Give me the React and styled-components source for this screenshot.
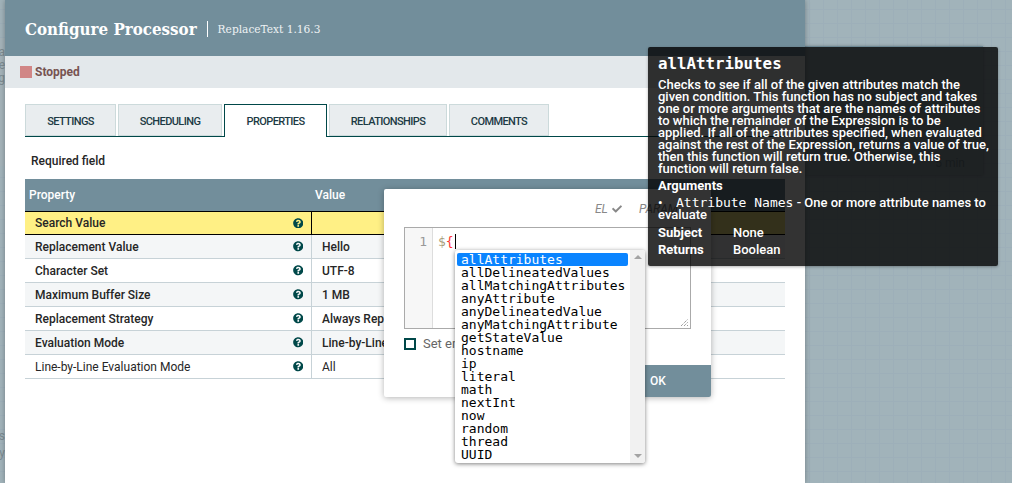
import React from "react";
import styled, { createGlobalStyle } from "styled-components";
import { FaQuestionCircle, FaCheck } from "react-icons/fa";

const GlobalStyle = createGlobalStyle`
    html, body {
        margin: 0;
        padding: 0;
        overflow: hidden;
    }
    body {
        font-family: Roboto, "Liberation Sans", sans-serif;
    }
`;

const Canvas = styled.div`
    position: relative;
    display: flex;
    width: 1012px;
    height: 483px;
    overflow: hidden;
    background-color: #a1b3ba;
    background-image:
        linear-gradient(to right, #9dafb9 1px, transparent 1px),
        linear-gradient(to bottom, #9dafb9 1px, transparent 1px);
    background-size: 14px 14px;
    background-position: 11px 9px;
`;

const LeftStrip = styled.div`
    display: flex;
    flex-direction: column;
    width: 5px;
    flex-shrink: 0;
    overflow: hidden;
`;

const StripPanel = styled.div`
    display: flex;
    flex-direction: column;
    align-items: flex-end;
    margin-top: 38px;
    height: 128px;
    padding-top: 8px;
    box-sizing: border-box;
    background: #a4b3b9;
    color: #7d8b91;
    font-size: 12px;
    line-height: 13px;
`;

const StripText = styled.div`
    display: flex;
    flex-direction: column;
    align-items: flex-end;
    margin-top: 262px;
    color: #7d8b91;
    font-size: 12px;
    line-height: 17px;
`;

const Dialog = styled.div`
    display: flex;
    flex-direction: column;
    width: 800px;
    height: 483px;
    flex-shrink: 0;
    background: #fff;
    box-shadow: 0 0 5px rgba(0, 0, 0, 0.3);
    z-index: 1;
`;

const DialogHeader = styled.div`
    display: flex;
    align-items: center;
    height: 56px;
    padding-left: 20px;
    padding-top: 2px;
    box-sizing: border-box;
    background: #728e9b;
    color: #fff;
`;

const Title = styled.div`
    font-family: "DejaVu Serif", serif;
    font-stretch: condensed;
    font-weight: 700;
    font-size: 16.8px;
    padding-right: 10px;
    border-right: 1px solid #fff;
    line-height: 16px;
`;

const Subtitle = styled.div`
    font-family: "DejaVu Serif", serif;
    font-stretch: condensed;
    font-size: 11.8px;
    margin-left: 10px;
    color: #eef2f4;
`;

const StatusBar = styled.div`
    display: flex;
    align-items: center;
    gap: 3px;
    height: 32px;
    padding-left: 15px;
    background: #e3e8eb;
`;

const StatusIcon = styled.span`
    width: 12px;
    height: 12px;
    background: #d18686;
`;

const StatusLabel = styled.span`
    font-size: 12px;
    font-weight: 700;
    color: #775351;
`;

const Content = styled.div`
    display: flex;
    flex-direction: column;
    padding: 16px 20px 0;
`;

const Tabs = styled.div`
    display: flex;
    gap: 2px;
    height: 33px;
    box-sizing: border-box;
    border-bottom: 1px solid #004849;
`;

const Tab = styled.div`
    display: flex;
    align-items: center;
    justify-content: center;
    width: ${(p) => p.$width}px;
    height: ${(p) => (p.$active ? 33 : 32)}px;
    padding-top: ${(p) => (p.$active ? 1 : 2)}px;
    box-sizing: border-box;
    font-size: 11px;
    letter-spacing: -0.6px;
    font-weight: 500;
    color: #1c3a44;
    background: ${(p) => (p.$active ? "#fff" : "#e9edef")};
    border: 1px solid ${(p) => (p.$active ? "#004849" : "#ccdadb")};
    border-bottom: ${(p) => (p.$active ? "none" : "1px solid #ccdadb")};
`;

const RequiredNote = styled.div`
    margin: 17px 0 0 6px;
    height: 25px;
    font-size: 12px;
    font-weight: 500;
    color: #262626;
    line-height: 14px;
`;

const Table = styled.div`
    display: flex;
    flex-direction: column;
    width: 760px;
`;

const HeaderRow = styled.div`
    display: flex;
    align-items: center;
    height: 32px;
    background: #728e9b;
    color: #fff;
    font-size: 12px;
    font-weight: 500;
`;

const HeaderCell = styled.div`
    width: ${(p) => p.$width}px;
    padding-left: 4px;
    padding-bottom: 1px;
    box-sizing: border-box;
`;

const Row = styled.div`
    display: flex;
    height: 24px;
    box-sizing: border-box;
    font-size: 12px;
    color: #262626;
    background: ${(p) => (p.$selected ? "#fff085" : p.$striped ? "#f4f6f7" : "#fff")};
    border-bottom: 1px solid ${(p) => (p.$selected ? "#000" : "#c7d2d7")};
    border-top: ${(p) => (p.$selected ? "1px solid #000" : "none")};
    font-weight: ${(p) => (p.$bold ? 500 : 400)};
`;

const NameCell = styled.div`
    display: flex;
    align-items: center;
    justify-content: space-between;
    width: 286px;
    padding: 0 8px 0 10px;
    box-sizing: border-box;
`;

const ValueCell = styled.div`
    display: flex;
    align-items: center;
    flex: 1;
    padding-left: 10px;
    border-left: 1px solid ${(p) => (p.$selected ? "#000" : "#c7d2d7")};
`;

const Help = styled(FaQuestionCircle)`
    width: 10.5px;
    height: 10.5px;
    color: #004849;
`;

const RightArea = styled.div`
    display: flex;
    flex-direction: column;
    flex: 1;
    padding-top: 46px;
`;

const BackPanel = styled.div`
    display: flex;
    flex-direction: column;
    align-items: flex-end;
    width: 178px;
    height: 129px;
    padding: 98px 18px 0 0;
    box-sizing: border-box;
    background: #97a9b0;
    border-top: 1px solid #728e9b;
    box-shadow: 0 0 3px rgba(0, 0, 0, 0.25);
    color: #71858d;
    font-size: 12px;
    line-height: 37px;
`;

const ExpressionDialog = styled.div`
    position: absolute;
    left: 384px;
    top: 189px;
    display: flex;
    flex-direction: column;
    width: 327px;
    height: 208px;
    background: #fff;
    border-radius: 2px;
    box-shadow: 0 1px 6px rgba(0, 0, 0, 0.3);
    z-index: 2;
`;

const SupportRow = styled.div`
    display: flex;
    align-items: center;
    gap: 4px;
    height: 38px;
    padding: 2px 0 0 211px;
    box-sizing: border-box;
    font-size: 12px;
    font-style: italic;
    color: #888;
`;

const SupportLabel = styled.span`
    margin-left: ${(p) => p.$gap || 0}px;
`;

const CheckMark = styled(FaCheck)`
    width: 10px;
    height: 10px;
    color: #888;
`;

const Editor = styled.div`
    position: relative;
    display: flex;
    height: 102px;
    margin: 0 20px;
    box-sizing: border-box;
    border: 1px solid #aaa;
    font-family: "DejaVu Sans Mono", monospace;
    font-size: 13px;
    line-height: 15px;
`;

const Gutter = styled.div`
    width: 28px;
    padding: 6px 5px 0 0;
    box-sizing: border-box;
    text-align: right;
    color: #999;
    background: #f7f7f7;
    border-right: 1px solid #ddd;
`;

const Code = styled.div`
    display: flex;
    padding: 6px 0 0 5px;
`;

const Dollar = styled.span`
    color: #a79f7e;
`;

const Brace = styled.span`
    color: #f33;
`;

const Caret = styled.span`
    width: 1px;
    height: 15px;
    margin-left: 1px;
    background: #000;
`;

const ResizeHandle = styled.svg`
    position: absolute;
    right: 1px;
    bottom: 1px;
    width: 9px;
    height: 9px;
`;

const CheckRow = styled.div`
    display: flex;
    align-items: center;
    gap: 7px;
    margin: 7px 20px 0;
    font-size: 13px;
    color: #666;
`;

const Box = styled.span`
    width: 12px;
    height: 12px;
    box-sizing: border-box;
    border: 2px solid #004849;
`;

const Footer = styled.div`
    display: flex;
    justify-content: flex-end;
    margin-top: auto;
`;

const OkButton = styled.div`
    display: flex;
    align-items: center;
    width: 92px;
    height: 32px;
    padding-left: 31px;
    box-sizing: border-box;
    font-size: 12px;
    font-weight: 500;
    color: #fff;
    background: #728e9b;
    border-radius: 0 0 2px 0;
`;

const Completions = styled.div`
    position: absolute;
    left: 455px;
    top: 250px;
    display: flex;
    width: 190px;
    height: 213px;
    background: #fff;
    border-radius: 3px;
    box-shadow: 0 1px 4px rgba(0, 0, 0, 0.5);
    overflow: hidden;
    z-index: 3;
`;

const CompletionList = styled.div`
    flex: 1;
    padding: 3px 2px;
    font-family: "DejaVu Sans Mono", monospace;
    font-size: 13px;
    line-height: 13px;
    color: #000;
`;

const Completion = styled.div`
    height: 13px;
    padding-left: 4px;
    border-radius: 2px;
    color: ${(p) => (p.$active ? "#fff" : "#000")};
    background: ${(p) => (p.$active ? "#0a84ff" : "transparent")};
`;

const Scrollbar = styled.div`
    display: flex;
    flex-direction: column;
    align-items: center;
    justify-content: space-between;
    width: 15px;
    padding: 5px 0;
    box-sizing: border-box;
    background: #f1f1f1;
`;

const Arrow = styled.span`
    width: 0;
    height: 0;
    border-left: 4px solid transparent;
    border-right: 4px solid transparent;
    border-${(p) => (p.$up ? "bottom" : "top")}: 4px solid #a3a3a3;
`;

const Tooltip = styled.div`
    position: absolute;
    left: 648px;
    top: 47px;
    width: 350px;
    height: 219px;
    padding: 8px 8px 8px 10px;
    box-sizing: border-box;
    background: rgba(0, 0, 0, 0.8);
    border-radius: 2px;
    box-shadow: 0 1px 3px rgba(0, 0, 0, 0.3);
    color: #fff;
    font-size: 13px;
    font-weight: 500;
    line-height: 12px;
    z-index: 4;
`;

const TipTitle = styled.div`
    font-family: "DejaVu Sans Mono", monospace;
    font-size: 15.8px;
    font-weight: 700;
    line-height: 17px;
    margin-bottom: 7px;
`;

const TipHeading = styled.div`
    font-weight: 700;
    margin-top: 2px;
    line-height: 17px;
`;

const TipArgument = styled.div`
    margin: 3px 0;
`;

const Bullet = styled.span`
    display: inline-block;
    width: 18px;
`;

const Mono = styled.span`
    font-family: "DejaVu Sans Mono", monospace;
    font-weight: 400;
    font-size: 13px;
`;

const TipRow = styled.div`
    display: flex;
    line-height: 17px;
`;

const TipKey = styled.span`
    width: 75px;
    font-weight: 700;
`;

const tabs = [
    { label: "SETTINGS", width: 91 },
    { label: "SCHEDULING", width: 104 },
    { label: "PROPERTIES", width: 103, active: true },
    { label: "RELATIONSHIPS", width: 118 },
    { label: "COMMENTS", width: 100 },
];

const rows = [
    { name: "Search Value", value: "", bold: true, selected: true },
    { name: "Replacement Value", value: "Hello", bold: true },
    { name: "Character Set", value: "UTF-8", bold: true },
    { name: "Maximum Buffer Size", value: "1 MB", bold: true },
    { name: "Replacement Strategy", value: "Always Replace", bold: true },
    { name: "Evaluation Mode", value: "Line-by-Line", bold: true },
    { name: "Line-by-Line Evaluation Mode", value: "All" },
];

const functions = [
    "allAttributes",
    "allDelineatedValues",
    "allMatchingAttributes",
    "anyAttribute",
    "anyDelineatedValue",
    "anyMatchingAttribute",
    "getStateValue",
    "hostname",
    "ip",
    "literal",
    "math",
    "nextInt",
    "now",
    "random",
    "thread",
    "UUID",
];

const App = () => {
    return (
        <Canvas>
            <GlobalStyle />
            <LeftStrip>
                <StripPanel>
                    <span>a</span>
                    <span>e</span>
                    <span>g</span>
                </StripPanel>
                <StripText>
                    <span>s</span>
                    <span>y</span>
                </StripText>
            </LeftStrip>

            <Dialog>
                <DialogHeader>
                    <Title>Configure Processor</Title>
                    <Subtitle>ReplaceText 1.16.3</Subtitle>
                </DialogHeader>
                <StatusBar>
                    <StatusIcon />
                    <StatusLabel>Stopped</StatusLabel>
                </StatusBar>
                <Content>
                    <Tabs>
                        {tabs.map((tab) => (
                            <Tab key={tab.label} $width={tab.width} $active={tab.active}>
                                {tab.label}
                            </Tab>
                        ))}
                    </Tabs>
                    <RequiredNote>Required field</RequiredNote>
                    <Table>
                        <HeaderRow>
                            <HeaderCell $width={286}>Property</HeaderCell>
                            <HeaderCell $width={200}>Value</HeaderCell>
                        </HeaderRow>
                        {rows.map((row, i) => (
                            <Row
                                key={row.name}
                                $bold={row.bold}
                                $selected={row.selected}
                                $striped={i % 2 === 1}
                            >
                                <NameCell>
                                    {row.name}
                                    <Help />
                                </NameCell>
                                <ValueCell $selected={row.selected}>{row.value}</ValueCell>
                            </Row>
                        ))}
                    </Table>
                </Content>
            </Dialog>

            <RightArea>
                <BackPanel>
                    <span>5 min</span>
                </BackPanel>
            </RightArea>

            <ExpressionDialog>
                <SupportRow>
                    <SupportLabel>EL</SupportLabel>
                    <CheckMark />
                    <SupportLabel $gap={13}>PARAM</SupportLabel>
                </SupportRow>
                <Editor>
                    <Gutter>1</Gutter>
                    <Code>
                        <Dollar>$</Dollar>
                        <Brace>{"{"}</Brace>
                        <Caret />
                    </Code>
                    <ResizeHandle viewBox="0 0 9 9">
                        <path d="M1 8 L8 1 M4 8 L8 4 M7 8 L8 7" stroke="#777" strokeWidth="1" strokeDasharray="1 1" fill="none" />
                    </ResizeHandle>
                </Editor>
                <CheckRow>
                    <Box />
                    Set empty string
                </CheckRow>
                <Footer>
                    <OkButton>OK</OkButton>
                </Footer>
            </ExpressionDialog>

            <Completions>
                <CompletionList>
                    {functions.map((name, i) => (
                        <Completion key={name} $active={i === 0}>
                            {name}
                        </Completion>
                    ))}
                </CompletionList>
                <Scrollbar>
                    <Arrow $up />
                    <Arrow />
                </Scrollbar>
            </Completions>

            <Tooltip>
                <TipTitle>allAttributes</TipTitle>
                <div>
                    Checks to see if all of the given attributes match the given condition. This
                    function has no subject and takes one or more arguments that are the names of
                    attributes to which the remainder of the Expression is to be applied. If all of
                    the attributes specified, when evaluated against the rest of the Expression,
                    returns a value of true, then this function will return true. Otherwise, this
                    function will return false.
                </div>
                <TipHeading>Arguments</TipHeading>
                <TipArgument>
                    <Bullet>•</Bullet>
                    <Mono>Attribute Names</Mono> - One or more attribute names to evaluate
                </TipArgument>
                <TipRow>
                    <TipKey>Subject</TipKey>
                    None
                </TipRow>
                <TipRow>
                    <TipKey>Returns</TipKey>
                    Boolean
                </TipRow>
            </Tooltip>
        </Canvas>
    );
};

export default App;
